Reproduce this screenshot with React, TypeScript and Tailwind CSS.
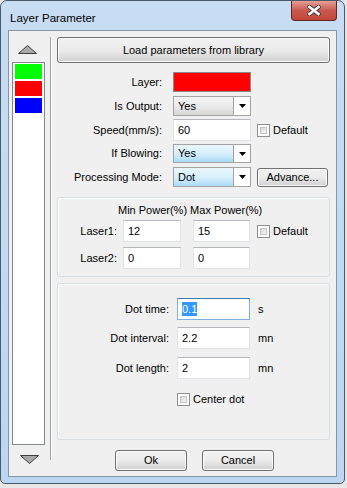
import React from "react";

function Checkbox() {
  return (
    <div className="w-[13px] h-[13px] border border-[#8e8f8f] bg-white p-[2px] shrink-0">
      <div className="w-full h-full bg-gradient-to-br from-[#d6d6d6] to-[#f8f8f8] border border-[#c4c4c4]" />
    </div>
  );
}

function Combo({ value, blue }: { value: string; blue?: boolean }) {
  return (
    <div className="flex w-[78px] h-full border border-[#a3a3a3] bg-white">
      <div
        className={
          "flex-1 flex items-center pl-[4px] border-r border-[#a3a3a3] " +
          (blue
            ? "bg-gradient-to-b from-[#eaf6fd] via-[#d9f0fc] to-[#a9dbf6]"
            : "bg-gradient-to-b from-[#f4f4f4] via-[#ebebeb] to-[#d5d5d5]")
        }
      >
        {value}
      </div>
      <div className="w-[16px] flex items-center justify-center bg-white">
        <svg width="7" height="4" viewBox="0 0 7 4">
          <polygon points="0,0 7,0 3.5,4" fill="#000" />
        </svg>
      </div>
    </div>
  );
}

function TextBox({ value, w, h = 22, focused, selected }: { value: string; w: number; h?: number; focused?: boolean; selected?: boolean }) {
  return (
    <div
      className={
        "flex items-center pl-[4px] bg-white border " +
        (focused ? "border-[#7ab2e8] border-t-[#3d7bad]" : "border-[#e0e3e8] border-t-[#b5b8bf]")
      }
      style={{ width: w, height: h }}
    >
      {selected ? <span className="bg-[#3399ff] text-white leading-[14px]">{value}</span> : <span>{value}</span>}
    </div>
  );
}

function Btn({ children, w, h }: { children: React.ReactNode; w: number; h: number }) {
  return (
    <div
      className="flex items-center justify-center border border-[#707070] rounded-[3px] bg-gradient-to-b from-[#f2f2f2] via-[#ebebeb] to-[#d0d0d0] shadow-[inset_0_0_0_1px_#fcfcfc]"
      style={{ width: w, height: h }}
    >
      {children}
    </div>
  );
}

export default function App() {
  return (
    <div className="w-[347px] h-[488px] bg-[#e6e6e6] overflow-hidden font-['Liberation_Sans',Arial,sans-serif] text-[11px] text-black">
      <div className="w-[345px] h-[484px] border border-[#4b5a6a] rounded-t-[7px] rounded-b-[5px] bg-gradient-to-b from-[#c8ddf3] to-[#bcd6f2] flex flex-col px-[7px] pb-[6px]">
        {/* title bar */}
        <div className="h-[29px] flex items-start -mx-[7px]">
          <div className="pl-[9px] pt-[9px] text-[11.5px] text-black">Layer Parameter</div>
          <div className="ml-auto mr-[7px] w-[46px] h-[20px] border border-[#5d2620] border-t-0 rounded-b-[4px] bg-gradient-to-b from-[#e4a096] via-[#c9574b] to-[#c4473a] flex items-center justify-center">
            <svg width="14" height="11" viewBox="0 0 14 11">
              <path d="M2.5 2 L11.5 9 M11.5 2 L2.5 9" stroke="#3d3d3d" strokeWidth="4.4" strokeLinecap="square" />
              <path d="M2.5 2 L11.5 9 M11.5 2 L2.5 9" stroke="#ffffff" strokeWidth="2.6" strokeLinecap="square" />
            </svg>
          </div>
        </div>
        {/* client */}
        <div className="flex-1 border border-[#8496a8] bg-[#f0f0f0] flex items-start">
          {/* left column */}
          <div className="w-[33px] ml-[3px] flex flex-col items-center">
            <svg className="mt-[14px] mr-[2px]" width="19" height="9" viewBox="0 0 19 9">
              <polygon points="0.5,8.5 9.5,0.5 18.5,8.5" fill="#a9a9a9" stroke="#3c3c3c" strokeWidth="1" />
            </svg>
            <div className="mt-[8px] w-[33px] h-[383px] border border-[#828790] bg-white flex flex-col px-[1px]">
              <div className="h-[17px] bg-[#00ff00] border border-white" />
              <div className="h-[17px] bg-[#ff0000] border border-white" />
              <div className="h-[17px] bg-[#0000ff] border border-white" />
            </div>
            <svg className="mt-[10px] mr-[-1px]" width="19" height="9" viewBox="0 0 19 9">
              <polygon points="0.5,0.5 9.5,8.5 18.5,0.5" fill="#a9a9a9" stroke="#3c3c3c" strokeWidth="1" />
            </svg>
          </div>
          {/* separator */}
          <div className="ml-[5px] mt-[6px] h-[423px] w-[2px] border-l border-[#a0a0a0] bg-white" />
          {/* right section */}
          <div className="ml-[5px] w-[273px] flex flex-col">
            <div className="mt-[6px]">
              <Btn w={273} h={26}>Load parameters from library</Btn>
            </div>
            <div className="mt-[9px] flex items-center h-[20px]">
              <div className="w-[105px] text-right">Layer:</div>
              <div className="ml-[11px] w-[78px] h-[20px] bg-[#ff0000] border border-[#8a8a8a]" />
            </div>
            <div className="mt-[4px] flex items-center h-[20px]">
              <div className="w-[105px] text-right">Is Output:</div>
              <div className="ml-[11px] h-[20px]"><Combo value="Yes" /></div>
            </div>
            <div className="mt-[3px] flex items-center h-[22px]">
              <div className="w-[105px] text-right">Speed(mm/s):</div>
              <div className="ml-[11px]"><TextBox value="60" w={78} /></div>
              <div className="ml-[6px]"><Checkbox /></div>
              <div className="ml-[3px]">Default</div>
            </div>
            <div className="mt-[3px] flex items-center h-[19px]">
              <div className="w-[105px] text-right">If Blowing:</div>
              <div className="ml-[11px] h-[19px]"><Combo value="Yes" blue /></div>
            </div>
            <div className="mt-[4px] flex items-center h-[20px]">
              <div className="w-[105px] text-right">Processing Mode:</div>
              <div className="ml-[11px] h-[20px]"><Combo value="Dot" blue /></div>
              <div className="ml-[6px]"><Btn w={71} h={19}>Advance...</Btn></div>
            </div>
            {/* group 1 */}
            <div className="mt-[10px] h-[80px] border border-[#d5dfe5] rounded-[3px] shadow-[inset_1px_1px_0_#ffffff] flex flex-col">
              <div className="flex mt-[5px] h-[14px] items-center">
                <div className="ml-[60px] whitespace-nowrap">Min Power(%) Max Power(%)</div>
              </div>
              <div className="flex items-center mt-[3px] h-[22px]">
                <div className="w-[59px] text-right">Laser1:</div>
                <div className="ml-[6px]"><TextBox value="12" w={58} /></div>
                <div className="ml-[12px]"><TextBox value="15" w={57} /></div>
                <div className="ml-[7px]"><Checkbox /></div>
                <div className="ml-[3px]">Default</div>
              </div>
              <div className="flex items-center mt-[5px] h-[22px]">
                <div className="w-[59px] text-right">Laser2:</div>
                <div className="ml-[6px]"><TextBox value="0" w={58} /></div>
                <div className="ml-[12px]"><TextBox value="0" w={57} /></div>
              </div>
            </div>
            {/* group 2 */}
            <div className="mt-[6px] h-[157px] border border-[#d5dfe5] rounded-[3px] shadow-[inset_1px_1px_0_#ffffff] flex flex-col">
              <div className="flex items-center mt-[14px] h-[22px]">
                <div className="w-[111px] text-right">Dot time:</div>
                <div className="ml-[8px]"><TextBox value="0.1" w={73} focused selected /></div>
                <div className="ml-[8px]">s</div>
              </div>
              <div className="flex items-center mt-[7px] h-[22px]">
                <div className="w-[111px] text-right">Dot interval:</div>
                <div className="ml-[8px]"><TextBox value="2.2" w={73} /></div>
                <div className="ml-[8px]">mn</div>
              </div>
              <div className="flex items-center mt-[8px] h-[22px]">
                <div className="w-[111px] text-right">Dot length:</div>
                <div className="ml-[8px]"><TextBox value="2" w={73} /></div>
                <div className="ml-[8px]">mn</div>
              </div>
              <div className="flex items-center mt-[14px] h-[13px]">
                <div className="w-[119px]" />
                <Checkbox />
                <div className="ml-[3px]">Center dot</div>
              </div>
            </div>
            {/* buttons */}
            <div className="mt-[10px] flex justify-center gap-[15px] pl-[2px]">
              <Btn w={72} h={21}>Ok</Btn>
              <Btn w={72} h={21}>Cancel</Btn>
            </div>
          </div>
        </div>
      </div>
    </div>
  );
}
